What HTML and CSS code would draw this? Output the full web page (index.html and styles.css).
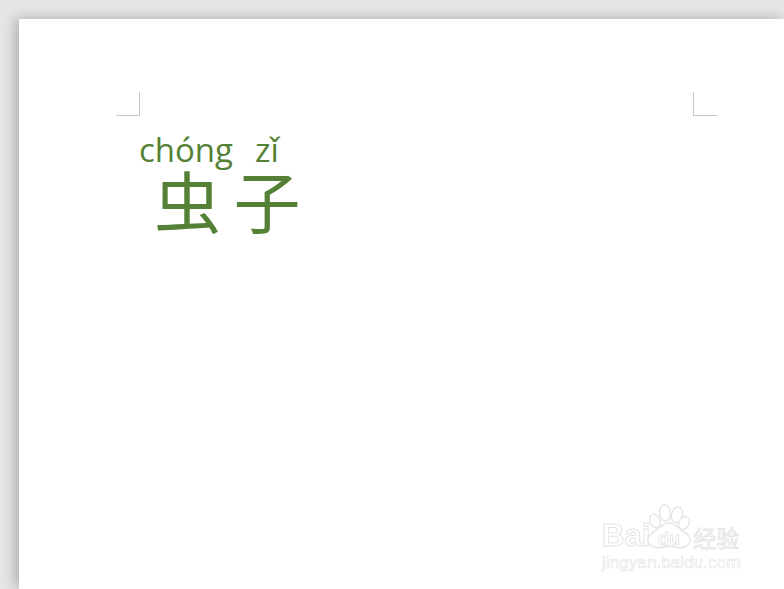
FILE: index.html
```html
<!DOCTYPE html>
<html lang="en">
<head>
    <meta charset="UTF-8">
    <meta name="viewport" content="width=device-width, initial-scale=1.0">
    <title>虫子</title>
    <link rel="stylesheet" href="styles.css">
</head>
<body>

    <div class="page">
        <div class="cropMarks">
            <div class="mark markLeft"></div>
            <div class="mark markRight"></div>
        </div>

        <div class="word">
            <div class="syllable syllableFirst">
                <span class="pinyin">chóng</span>
                <span class="hanzi" lang="zh-CN">虫</span>
            </div>
            <div class="syllable syllableSecond">
                <span class="pinyin">zǐ</span>
                <span class="hanzi" lang="zh-CN">子</span>
            </div>
        </div>
    </div>

    <div class="watermark">
        <div class="brand">
            <span class="brandText">Bai</span>
            <svg class="paw" width="46" height="48" viewBox="0 0 46 48">
                <g fill="#fff" stroke="#e6e6e6" stroke-width="1.5">
                    <ellipse cx="8" cy="18" rx="5" ry="7" transform="rotate(-25 8 18)"/>
                    <ellipse cx="18" cy="10" rx="5.5" ry="8" transform="rotate(-8 18 10)"/>
                    <ellipse cx="30" cy="12" rx="5.5" ry="8" transform="rotate(12 30 12)"/>
                    <ellipse cx="37" cy="20" rx="5" ry="7" transform="rotate(28 37 20)"/>
                    <path d="M22 20c6 0 9 5 14 8 5 3 8 6 7 10-1 6-9 8-15 6-4-1-8-1-12 0-6 2-14 0-15-6-1-4 2-7 7-10 5-3 8-8 14-8z"/>
                </g>
                <text class="pawText" x="22" y="42" text-anchor="middle">du</text>
            </svg>
            <span class="brandCn" lang="zh-CN">经验</span>
        </div>
        <div class="siteUrl">jingyan.baidu.com</div>
    </div>

</body>
</html>
```

FILE: styles.css
```css
html, body {
    height: 100%;
}
body {
    margin: 0;
    padding: 19px 0 0 19px;
    box-sizing: border-box;
    overflow: hidden;
    background: #e6e6e6;
    font-family: "Open Sans", "Noto Sans", sans-serif;
}
.page {
    height: 100%;
    padding: 73px 67px 0 97px;
    box-sizing: border-box;
    background: #fff;
    box-shadow: -4px -1px 12px rgba(0, 0, 0, 0.24);
}
.cropMarks {
    display: flex;
    justify-content: space-between;
    height: 23px;
}
.mark {
    width: 23px;
    height: 23px;
    border-bottom: 1px solid #c6c6c6;
}
.markLeft {
    border-right: 1px solid #c6c6c6;
}
.markRight {
    width: 23px;
    border-left: 1px solid #c6c6c6;
}
.word {
    display: flex;
    margin: 21px 0 0 23px;
    color: #548135;
}
.syllable {
    display: flex;
    flex-direction: column;
    align-items: center;
}
.syllableFirst {
    width: 94px;
}
.syllableFirst .hanzi {
    margin-left: 3px;
}
.syllableSecond {
    width: 68px;
}
.pinyin {
    font-size: 33px;
    line-height: 28px;
}
.hanzi {
    font-family: "Noto Sans CJK SC", sans-serif;
    font-size: 67px;
    line-height: 70px;
}
.watermark {
    position: absolute;
    left: 602px;
    top: 503px;
    color: #fff;
    -webkit-text-stroke: 1px #e4e4e4;
    filter: blur(0.4px);
}
.brand {
    display: flex;
    align-items: flex-end;
    height: 48px;
}
.brandText {
    font-family: "Liberation Sans", sans-serif;
    font-size: 31px;
    font-weight: bold;
    line-height: 30px;
}
.paw {
    margin-left: -3px;
    flex-shrink: 0;
}
.pawText {
    font-family: "Liberation Sans", sans-serif;
    font-size: 18px;
    font-weight: bold;
    fill: #fff;
    stroke: #e4e4e4;
    stroke-width: 0.8;
}
.brandCn {
    font-family: "Noto Sans CJK SC", sans-serif;
    font-size: 23px;
    line-height: 28px;
}
.siteUrl {
    margin-top: 2px;
    font-family: "Liberation Sans", sans-serif;
    font-size: 17.2px;
    line-height: 18px;
    -webkit-text-stroke: 0.6px #e4e4e4;
}
```
